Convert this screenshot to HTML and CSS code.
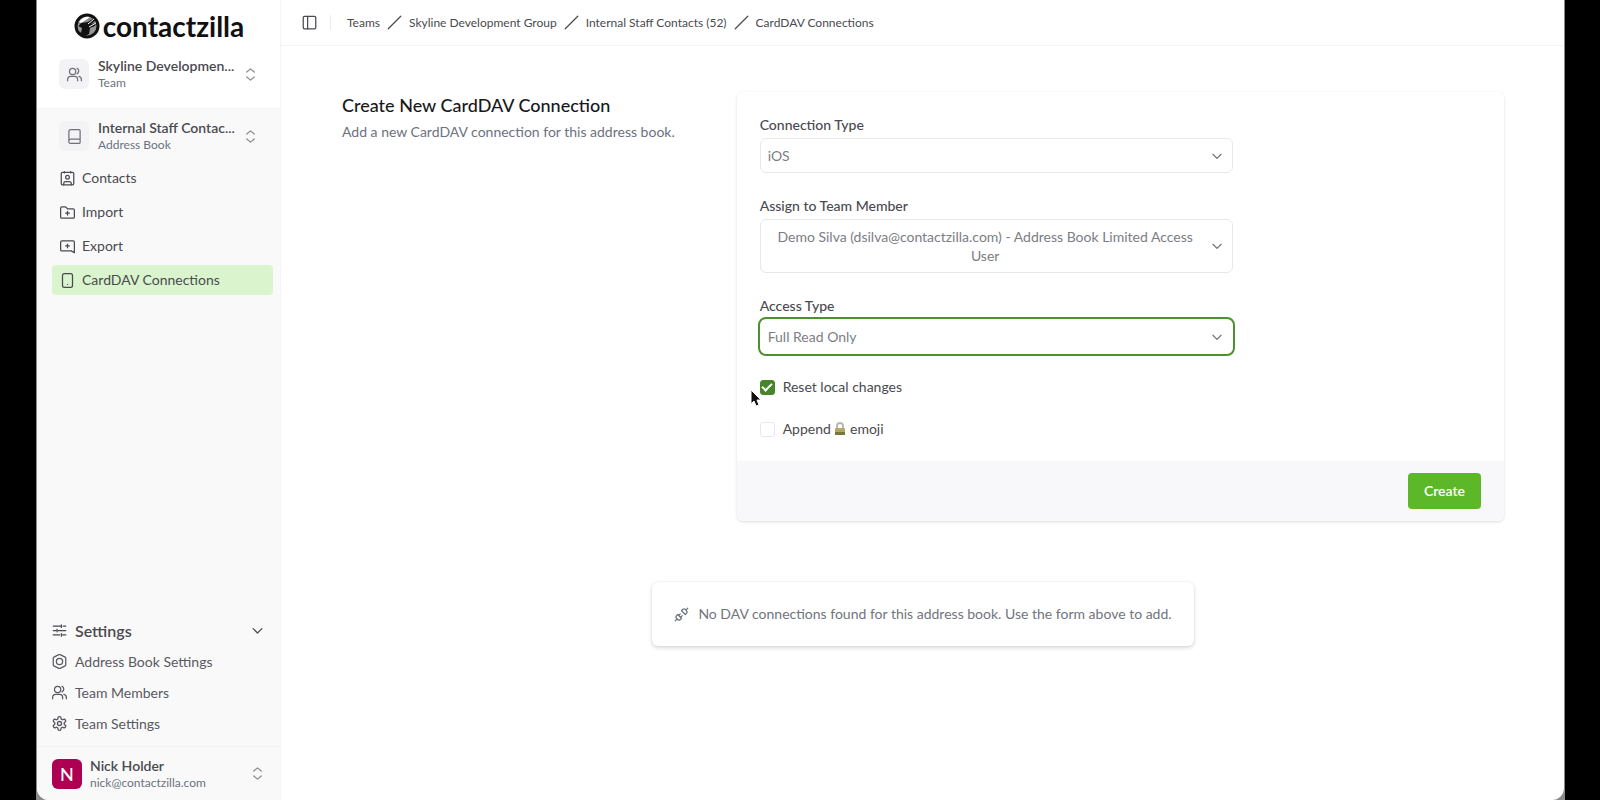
FILE: index.html
```html
<!DOCTYPE html>
<html lang="en">
<head>
  <meta charset="UTF-8">
  <meta name="viewport" content="width=device-width, initial-scale=1">
  <title>CardDAV Connections - Contactzilla</title>
  <link rel="stylesheet" href="styles.css">
</head>
<body>

  <!-- icons -->
  <svg class="sprite" aria-hidden="true">
    <symbol id="users" viewBox="0 0 24 24"><path d="M17 22v-2a5 5 0 0 0-5-5H6a5 5 0 0 0-5 5v2M23 22v-2a5 5 0 0 0-4-5M16 2a5 5 0 0 1 0 9"/><circle cx="9" cy="7" r="5"/></symbol>
    <symbol id="users-round" viewBox="0 0 24 24"><path d="M17 22v-2a5 5 0 0 0-5-5H6a5 5 0 0 0-5 5v2M23 22v-2a5 5 0 0 0-4-5M16 2a5 5 0 0 1 0 9"/><circle cx="9" cy="7" r="5"/></symbol>
    <symbol id="book" viewBox="0 0 24 24"><path d="M3 19V4a3 3 0 0 1 3-3h13a2 2 0 0 1 2 2v18a2 2 0 0 1-2 2H6a3 3 0 0 1-3-4zM3 19a3 3 0 0 1 3-3h15"/></symbol>
    <symbol id="updown" viewBox="0 0 24 24"><path d="m6 8 6-5 6 5M6 16l6 5 6-5"/></symbol>
    <symbol id="down" viewBox="0 0 24 24"><path d="m5 9 7 7 7-7"/></symbol>
    <symbol id="contact" viewBox="0 0 24 24"><rect x="2" y="2" width="20" height="20" rx="2"/><path d="M6 22v-2a3 3 0 0 1 3-3h6a3 3 0 0 1 3 3v2M7 1v2M17 1v2"/><circle cx="12" cy="10" r="3"/></symbol>
    <symbol id="folder-plus" viewBox="0 0 24 24"><path d="M1 5a2 2 0 0 1 2-2h6l3 3h9a2 2 0 0 1 2 2v11a2 2 0 0 1-2 2H3a2 2 0 0 1-2-2zM12 10v6M9 13h6"/></symbol>
    <symbol id="message-plus" viewBox="0 0 24 24"><path d="M23 22 18 19H3a2 2 0 0 1-2-2V5a2 2 0 0 1 2-2h18a2 2 0 0 1 2 2zM12 8v6M9 11h6"/></symbol>
    <symbol id="phone" viewBox="0 0 24 24"><rect x="4" y="1" width="16" height="22" rx="3"/><path d="M12 18h.01"/></symbol>
    <symbol id="sliders" viewBox="0 0 24 24"><path d="M2 5h12M18 5h4M2 12h4M10 12h12M2 19h10M17 19h5M15 3v4M8 10v4M15 17v4"/></symbol>
    <symbol id="nut" viewBox="0 0 24 24"><path d="M22 17V7a2 2 0 0 0-1-2l-8-4a2 2 0 0 0-2 0L3 5a2 2 0 0 0-1 2v10a2 2 0 0 0 1 2l8 4a2 2 0 0 0 2 0l8-4a2 2 0 0 0 1-2z"/><circle cx="12" cy="12" r="5"/></symbol>
    <symbol id="gear" viewBox="1 1 22 22"><path d="M12.22 2h-.44a2 2 0 0 0-2 2v.18a2 2 0 0 1-1 1.73l-.43.25a2 2 0 0 1-2 0l-.15-.08a2 2 0 0 0-2.73.73l-.22.38a2 2 0 0 0 .73 2.73l.15.1a2 2 0 0 1 1 1.72v.51a2 2 0 0 1-1 1.74l-.15.09a2 2 0 0 0-.73 2.73l.22.38a2 2 0 0 0 2.73.73l.15-.08a2 2 0 0 1 2 0l.43.25a2 2 0 0 1 1 1.73V20a2 2 0 0 0 2 2h.44a2 2 0 0 0 2-2v-.18a2 2 0 0 1 1-1.73l.43-.25a2 2 0 0 1 2 0l.15.08a2 2 0 0 0 2.73-.73l.22-.39a2 2 0 0 0-.73-2.73l-.15-.08a2 2 0 0 1-1-1.74v-.5a2 2 0 0 1 1-1.74l.15-.09a2 2 0 0 0 .73-2.73l-.22-.38a2 2 0 0 0-2.73-.73l-.15.08a2 2 0 0 1-2 0l-.43-.25a2 2 0 0 1-1-1.73V4a2 2 0 0 0-2-2z"/><circle cx="12" cy="12" r="3"/></symbol>
    <symbol id="panel" viewBox="0 0 24 24"><rect x="2" y="2" width="20" height="20" rx="2"/><path d="M9 2v20"/></symbol>
    <symbol id="slash" viewBox="0 0 24 24"><path d="M22 2 2 22"/></symbol>
    <symbol id="unplug" viewBox="0 0 24 24"><path d="m19 5 3-3M2 22l3-3M6.3 20.3a2.4 2.4 0 0 0 3.4 0L12 18l-6-6-2.3 2.3a2.4 2.4 0 0 0 0 3.4ZM7.5 13.5 10 11M10.5 16.5 13 14M12 6l6 6 2.3-2.3a2.4 2.4 0 0 0 0-3.4l-2.6-2.6a2.4 2.4 0 0 0-3.4 0Z"/></symbol>
  </svg>

  <div class="desktop">
  <div class="window">

    <aside class="sidebar">
      <div class="sidebar-top">
        <a class="logo" href="#">
          <svg class="logo-mark" viewBox="0 0 24 24" aria-hidden="true">
            <circle cx="12" cy="12" r="11" fill="#8c8c8c" stroke="#111" stroke-width="3"/>
            <path d="M4 8q4-6 11-5l-4 3-5 3z" fill="#fff"/>
            <path d="M6 9l7-1 6-4 2 2-5 4 5-1-1 3-5 2-1 6-6 3-4-3 2-6-3-1z" fill="#111"/>
            <path d="m13 10 6-5M14 13l7-4" stroke="#fff" stroke-width="1"/>
            <path d="M3 12l4 2-1 5q-3-3-3-7zM16 14l5-2q0 5-6 8z" fill="#999"/>
          </svg>
          <span>contactzilla</span>
        </a>
        <button class="switcher" type="button">
          <span class="tile"><svg class="icon"><use href="#users-round"/></svg></span>
          <span class="switcher-text"><strong>Skyline Developmen...</strong><small>Team</small></span>
          <svg class="icon faint"><use href="#updown"/></svg>
        </button>
      </div>

      <button class="switcher" type="button">
        <span class="tile"><svg class="icon"><use href="#book"/></svg></span>
        <span class="switcher-text"><strong>Internal Staff Contac...</strong><small>Address Book</small></span>
        <svg class="icon faint"><use href="#updown"/></svg>
      </button>

      <nav class="nav">
        <a href="#"><svg class="icon"><use href="#contact"/></svg>Contacts</a>
        <a href="#"><svg class="icon"><use href="#folder-plus"/></svg>Import</a>
        <a href="#"><svg class="icon"><use href="#message-plus"/></svg>Export</a>
        <a href="#" class="active"><svg class="icon"><use href="#phone"/></svg>CardDAV Connections</a>
      </nav>

      <nav class="settings">
        <button type="button" class="settings-toggle">
          <svg class="icon"><use href="#sliders"/></svg>
          <span>Settings</span>
          <svg class="icon"><use href="#down"/></svg>
        </button>
        <a href="#"><svg class="icon"><use href="#nut"/></svg>Address Book Settings</a>
        <a href="#"><svg class="icon"><use href="#users"/></svg>Team Members</a>
        <a href="#"><svg class="icon"><use href="#gear"/></svg>Team Settings</a>
      </nav>

      <button class="user" type="button">
        <span class="avatar">N</span>
        <span class="switcher-text"><strong>Nick Holder</strong><small>nick@contactzilla.com</small></span>
        <svg class="icon faint"><use href="#updown"/></svg>
      </button>
    </aside>

    <div class="page">
      <header class="topbar">
        <button class="panel-toggle" type="button" aria-label="Toggle sidebar"><svg class="icon"><use href="#panel"/></svg></button>
        <nav class="breadcrumb">
          <a href="#">Teams</a>
          <svg class="icon"><use href="#slash"/></svg>
          <a href="#">Skyline Development Group</a>
          <svg class="icon"><use href="#slash"/></svg>
          <a href="#">Internal Staff Contacts (52)</a>
          <svg class="icon"><use href="#slash"/></svg>
          <a href="#">CardDAV Connections</a>
        </nav>
      </header>

      <main class="content">
        <section class="create">
          <div class="intro">
            <h1>Create New CardDAV Connection</h1>
            <p>Add a new CardDAV connection for this address book.</p>
          </div>

          <form class="card">
            <div class="card-body">
              <div class="field">
                <label for="type">Connection Type</label>
                <div class="select">
                  <select id="type"><option>iOS</option></select>
                  <svg class="icon"><use href="#down"/></svg>
                </div>
              </div>

              <div class="field">
                <label for="member">Assign to Team Member</label>
                <button id="member" class="member" type="button" aria-haspopup="listbox">
                  <span>Demo Silva (dsilva@contactzilla.com) - Address Book Limited Access User</span>
                  <svg class="icon"><use href="#down"/></svg>
                </button>
              </div>

              <div class="field">
                <label for="access">Access Type</label>
                <div class="select focused">
                  <select id="access"><option>Full Read Only</option></select>
                  <svg class="icon"><use href="#down"/></svg>
                </div>
              </div>

              <div class="check">
                <input type="checkbox" id="reset" checked>
                <label for="reset">Reset local changes</label>
                <svg class="cursor" viewBox="0 0 12 18" aria-hidden="true"><path d="M1 1v14l3-3 2 5 3-1-2-5h4z" fill="#111" stroke="#fff"/></svg>
              </div>
              <div class="check">
                <input type="checkbox" id="append">
                <label for="append">Append
                  <svg class="lock" viewBox="0 0 12 14" role="img" aria-label="lock"><path d="M3 7V4a3 3 0 0 1 6 0v3" fill="none" stroke="#b9baae" stroke-width="2"/><rect x="1" y="6" width="10" height="7" rx="1" fill="#b3a868"/><path d="M1 10h10v3H1z" fill="#76763a"/></svg>
                  emoji</label>
              </div>
            </div>
            <div class="card-footer"><button type="submit">Create</button></div>
          </form>
        </section>

        <div class="empty">
          <svg class="icon"><use href="#unplug"/></svg>
          <p>No DAV connections found for this address book. Use the form above to add.</p>
        </div>
      </main>
    </div>

  </div>
  </div>
</body>
</html>
```
FILE: styles.css
```css
* { box-sizing: border-box; }
body { margin: 0; padding: 0 35px 0 36px; background: #000; color: #4a4a50; font: 14px/20px Lato, sans-serif; }
a { color: inherit; text-decoration: none; }
button { font: inherit; color: inherit; background: none; border: 0; padding: 0; text-align: left; }
h1, p { margin: 0; }
.sprite { position: absolute; width: 0; height: 0; }
.icon { width: 15px; height: 15px; flex: none; fill: none; stroke: currentColor; stroke-width: 2; stroke-linecap: round; stroke-linejoin: round; }
.faint { color: #8b8b92; }

.desktop { background: #8a8a8a; padding: 0 1px; }
.window { display: flex; min-height: 100vh; background: #fff; border-radius: 0 0 12px 12px; overflow: hidden; }

/* sidebar */
.sidebar { width: 244px; flex: none; display: flex; flex-direction: column; background: #f9f9f9; border-right: 1px solid #f4f4f5; }
.sidebar-top { background: #fff; padding: 10px 0 8px; border-bottom: 1px solid #f4f4f5; }
.logo { display: flex; align-items: center; justify-content: center; gap: 4px; height: 32px; margin-bottom: 6px; padding-left: 2px; color: #111; font-size: 28px; font-weight: 700; line-height: 28px; }
.logo-mark { width: 24px; height: 24px; overflow: visible; }
.switcher { display: flex; align-items: center; gap: 9px; width: 100%; height: 52px; padding: 0 22px; }
.sidebar > .switcher { margin-top: 1px; }
.tile { display: flex; align-items: center; justify-content: center; width: 30px; height: 30px; flex: none; border-radius: 6px; background: #f3f3f6; color: #71717a; }
.switcher-text { flex: 1; min-width: 0; }
.switcher-text strong, .switcher-text small { display: block; white-space: nowrap; }
.switcher-text strong { font-size: 14px; font-weight: 600; line-height: 18px; }
.switcher-text small { font-size: 12px; line-height: 16px; color: #6b7280; }
.nav { padding: 1px 7px 0 15px; display: grid; gap: 4px; }
.nav a { display: flex; align-items: center; gap: 7px; height: 30px; padding: 0 8px; border-radius: 4px; }
.nav .active { background: #daf5cd; }
.settings { margin-top: auto; padding: 0 15px 7px; }
.settings a, .settings-toggle { display: flex; align-items: center; gap: 8px; width: 100%; height: 31px; color: #5a5a63; }
.settings-toggle { font-size: 16px; font-weight: 600; color: #4a4a50; }
.settings-toggle span { flex: 1; }
.user { display: flex; align-items: center; gap: 8px; height: 54px; padding: 0 15px; border-top: 1px solid #f1f1f3; }
.avatar { width: 30px; height: 30px; border-radius: 6px; background: #ae0052; color: #fff; font-size: 18px; font-weight: 500; line-height: 30px; text-align: center; }

/* page */
.page { flex: 1; min-width: 0; }
.topbar { display: flex; align-items: center; height: 46px; padding-left: 21px; border-bottom: 1px solid #f4f4f5; font-size: 12px; }
.panel-toggle { display: flex; padding-right: 13px; border-right: 1px solid #ececef; }
.breadcrumb { display: flex; align-items: center; gap: 7px; margin-left: 16px; }
.content { padding: 46px 60px 46px 61px; }
.create { display: grid; grid-template-columns: 1fr 2fr; gap: 11px; }
.intro h1 { color: #18181b; font-size: 18px; font-weight: 500; line-height: 26px; }
.intro p { margin-top: 4px; color: #6b7280; }

.card { border-radius: 6px; overflow: hidden; box-shadow: 0 1px 3px rgba(0, 0, 0, .14); }
.card-body { padding: 23px 23px 22px; }
.field { max-width: 473px; margin-bottom: 23px; }
.field > label { display: block; margin-bottom: 3px; font-weight: 500; }
.select { display: grid; align-items: center; }
.select > * { grid-area: 1 / 1; }
.select .icon, .member .icon { width: 14px; height: 14px; color: #71717a; }
.select .icon { justify-self: end; margin-right: 9px; pointer-events: none; }
.select select, .member { width: 100%; min-height: 35px; border: 1px solid #e8e8eb; border-radius: 6px; background: #fff; color: #7b7d85; font: inherit; }
.select select { padding: 0 32px 0 7px; appearance: none; }
.focused select { outline: 2px solid #4c9130; border-color: #fff; }
.member { display: flex; align-items: center; gap: 8px; padding: 7px 8px; line-height: 19px; text-align: center; }
.member span { flex: 1; }
.check { position: relative; display: flex; align-items: center; gap: 8px; height: 20px; }
.check + .check { margin-top: 22px; }
.check input { appearance: none; display: grid; place-items: center; width: 15px; height: 15px; margin: 0; border: 1px solid #e8e8eb; border-radius: 3px; }
.check input:checked { background: #46852a; border-color: #46852a; }
.check input:checked::after { content: ""; width: 8px; height: 4px; border: solid #fff; border-width: 0 0 2px 2px; transform: rotate(-45deg); margin-bottom: 2px; }
.lock { width: 12px; height: 14px; vertical-align: -2px; }
.cursor { position: absolute; left: -10px; top: 12px; width: 12px; height: 18px; }
.card-footer { display: flex; justify-content: flex-end; padding: 12px 23px; background: #f8f8fa; }
.card-footer button { height: 36px; padding: 0 16px; border-radius: 4px; background: #5cb828; color: #fff; font-weight: 600; }

.empty { display: flex; align-items: center; gap: 9px; width: fit-content; margin: 61px auto 0; padding: 22px; border-radius: 6px; color: #71757e; box-shadow: 0 2px 4px rgba(0, 0, 0, .14), 0 0 2px rgba(0, 0, 0, .1); }
```
